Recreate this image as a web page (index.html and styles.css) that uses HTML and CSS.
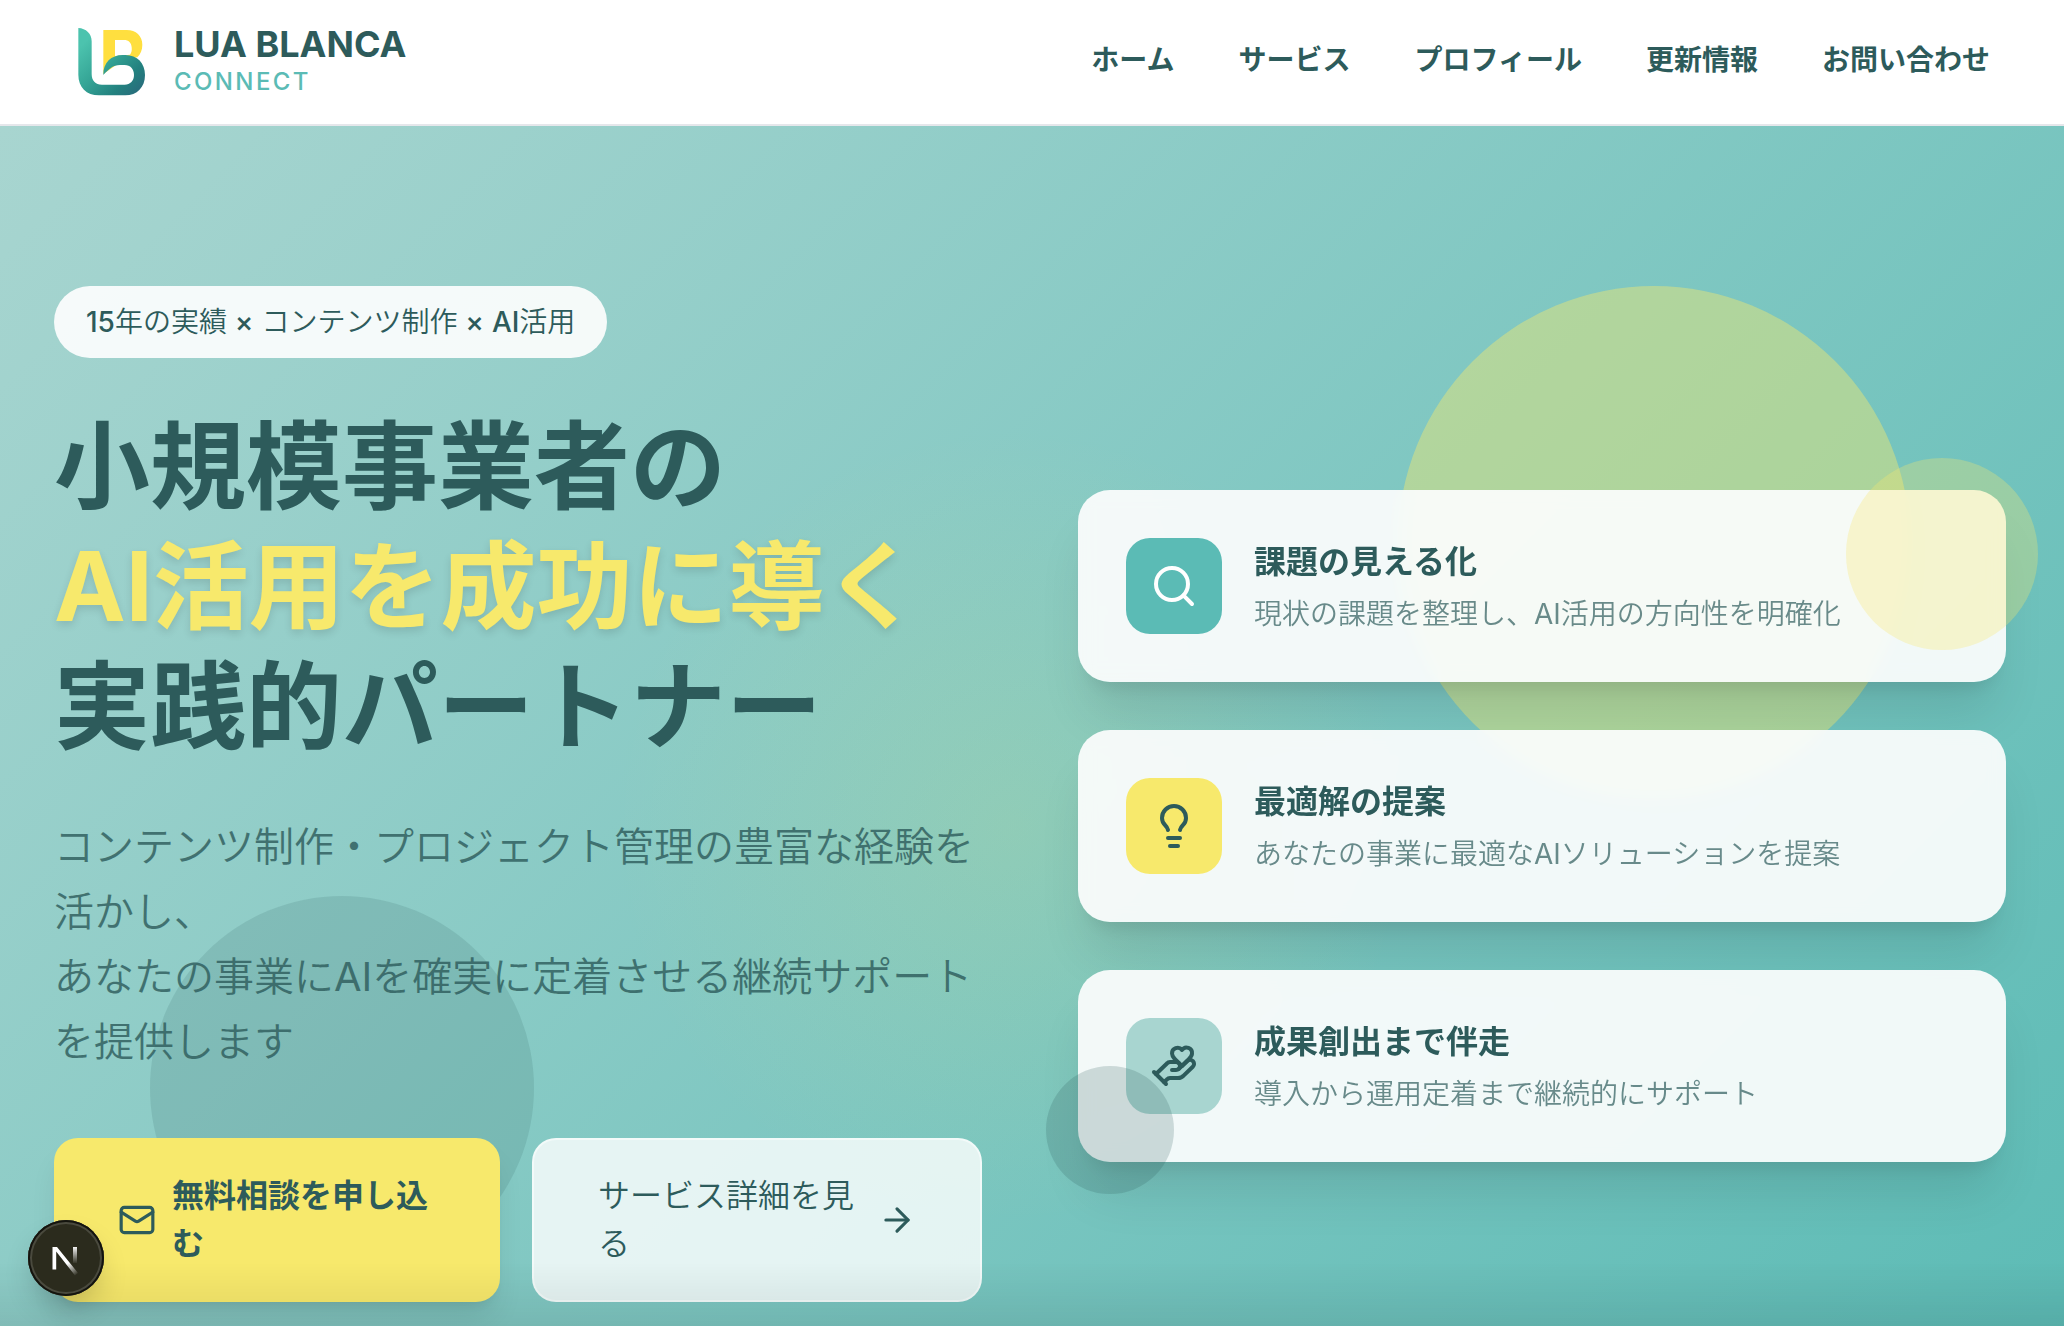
FILE: index.html
```html
<!DOCTYPE html>
<html lang="ja">
<head>
<meta charset="utf-8">
<meta name="viewport" content="width=device-width, initial-scale=1">
<title>LUA BLANCA CONNECT</title>
<link rel="stylesheet" href="styles.css">
</head>
<body>
<header class="site-header">
  <a class="brand" href="#">
    <svg class="brand-logo" viewBox="96 66 240 240" aria-hidden="true">
      <defs>
        <linearGradient id="lb-teal" gradientUnits="userSpaceOnUse" x1="130" y1="130" x2="290" y2="290">
          <stop offset="0" stop-color="#4cc3ae"/>
          <stop offset=".4" stop-color="#35a596"/>
          <stop offset=".75" stop-color="#23817f"/>
          <stop offset="1" stop-color="#296b7c"/>
        </linearGradient>
      </defs>
      <path fill="#ffdf3f" fill-rule="evenodd" d="M190 90H260C288 90 307 108 307 134C307 150 302 162 292 172L250 180L190 222ZM225 120V168L270 164C275 158 276 150 275 142C274 128 266 120 252 120Z"/>
      <path fill="url(#lb-teal)" d="M115 84C138 85 155 101 155 124V222C155 242 166 254 186 254H254C271 254 282 242 282 225C282 207 271 195 254 195H240C219 195 207 207 190 225C189 188 214 165 248 165H256C292 165 315 190 315 225C315 262 291 286 256 286H177C139 286 115 262 115 224Z"/>
    </svg>
    <span class="brand-text">
      <span class="brand-name">LUA BLANCA</span>
      <span class="brand-sub">CONNECT</span>
    </span>
  </a>
  <nav class="site-nav">
    <a href="#">ホーム</a>
    <a href="#">サービス</a>
    <a href="#">プロフィール</a>
    <a href="#">更新情報</a>
    <a href="#">お問い合わせ</a>
  </nav>
</header>
<main class="hero">
  <div class="orb orb-sun"></div>
  <div class="orb orb-shade"></div>
  <div class="hero-inner">
    <section class="intro">
      <p class="badge"><b>15</b>年の実績 <b>×</b> コンテンツ制作 <b>×</b> <b>AI</b>活用</p>
      <h1 class="headline">小規模事業者の<br><span class="headline-accent">AI活用を成功に導く</span><br>実践的パートナー</h1>
      <p class="lead">コンテンツ制作・プロジェクト管理の豊富な経験を活かし、<br>あなたの事業に<span class="latin">AI</span>を確実に定着させる継続サポートを提供します</p>
      <div class="actions">
        <button class="btn btn-primary" type="button">
          <svg class="btn-icon" viewBox="0 0 24 24" aria-hidden="true"><rect x="2" y="4" width="20" height="16" rx="2"/><path d="m22 7-8.970 5.700a1.940 1.940 0 0 1-2.060 0L2 7"/></svg>
          <span>無料相談を申し込む</span>
        </button>
        <button class="btn btn-secondary" type="button">
          <span>サービス詳細を見る</span>
          <svg class="btn-icon" viewBox="0 0 24 24" aria-hidden="true"><path d="M5 12h14"/><path d="m12 5 7 7-7 7"/></svg>
        </button>
      </div>
    </section>
    <section class="features">
      <article class="card">
        <div class="card-icon card-icon-teal"><svg viewBox="0 0 24 24" aria-hidden="true"><circle cx="11" cy="11" r="8"/><path d="m21 21-4.300-4.300"/></svg></div>
        <div><h2 class="card-title">課題の見える化</h2><p class="card-desc">現状の課題を整理し、<span class="latin">AI</span>活用の方向性を明確化</p></div>
      </article>
      <article class="card">
        <div class="card-icon card-icon-yellow"><svg viewBox="0 0 24 24" aria-hidden="true"><path d="M15 14c.2-1 .7-1.700 1.500-2.500 1-.9 1.500-2.200 1.500-3.500A6 6 0 0 0 6 8c0 1 .2 2.200 1.500 3.500.7.7 1.300 1.500 1.500 2.500"/><path d="M9 18h6"/><path d="M10 22h4"/></svg></div>
        <div><h2 class="card-title">最適解の提案</h2><p class="card-desc">あなたの事業に最適な<span class="latin">AI</span>ソリューションを提案</p></div>
      </article>
      <article class="card">
        <div class="card-icon card-icon-mint"><svg viewBox="0 0 24 24" aria-hidden="true"><path d="M11 14h2a2 2 0 1 0 0-4h-3c-.6 0-1.100.2-1.400.6L3 16"/><path d="m7 20 1.600-1.400c.3-.4.8-.6 1.400-.6h4c1.100 0 2.100-.4 2.800-1.200l4.600-4.400a2 2 0 0 0-2.750-2.910l-4.200 3.900"/><path d="m2 15 6 6"/><path d="M19.500 8.500c.7-.7 1.500-1.600 1.500-2.700A2.730 2.730 0 0 0 16 4a2.780 2.780 0 0 0-5 1.800c0 1.200.8 2 1.500 2.800L16 12Z"/></svg></div>
        <div><h2 class="card-title">成果創出まで伴走</h2><p class="card-desc">導入から運用定着まで継続的にサポート</p></div>
      </article>
      <div class="orb orb-glint"></div>
      <div class="orb orb-dusk"></div>
    </section>
  </div>
  <div class="hero-fade"></div>
</main>
<button class="dev-badge" type="button" aria-label="Open developer tools">
  <svg viewBox="0 0 76 76" aria-hidden="true">
    <defs>
      <linearGradient id="n-diag" gradientUnits="userSpaceOnUse" x1="40" y1="43" x2="49" y2="55"><stop offset="0" stop-color="#fff"/><stop offset="1" stop-color="#fff" stop-opacity="0"/></linearGradient>
      <linearGradient id="n-stem" gradientUnits="userSpaceOnUse" x1="0" y1="26" x2="0" y2="44"><stop offset="0" stop-color="#fff"/><stop offset="1" stop-color="#fff" stop-opacity="0"/></linearGradient>
    </defs>
    <path d="M24.500 27H29L50 53L47 55.500L28.200 31.500V49.500H24.500Z" fill="url(#n-diag)"/>
    <path d="M47 27V43" fill="none" stroke="url(#n-stem)" stroke-width="4"/>
  </svg>
</button>
</body>
</html>
```
FILE: styles.css
```css
:root {
  --ink: #2d5b5b;
  --teal: #5bbbb5;
  --mint: #a8d5d0;
  --yellow: #f7e96c;
}

* { box-sizing: border-box; }

body {
  margin: 0;
  min-height: 100vh;
  display: flex;
  flex-direction: column;
  overflow: hidden;
  color: var(--ink);
  font-family: Inter, "Noto Sans CJK JP", sans-serif;
  font-size: 28px;
}

h1, h2, p { margin: 0; }
a { color: inherit; text-decoration: none; }
button { font: inherit; color: inherit; cursor: pointer; }
.latin { font-weight: 400; }

.site-header {
  display: flex;
  align-items: center;
  justify-content: space-between;
  height: 126px;
  padding: 0 74px 0 72px;
  background: #fff;
  border-bottom: 2px solid #e5e7eb;
}

.brand { display: flex; align-items: center; gap: 22px; }
.brand-logo { width: 80px; height: 80px; }
.brand-text { display: flex; flex-direction: column; }
.brand-name { font-size: 36px; font-weight: 700; line-height: 40px; }
.brand-sub { font-size: 24px; font-weight: 500; line-height: 36px; letter-spacing: .1em; color: var(--teal); }

.site-nav { display: flex; gap: 64px; font-weight: 700; line-height: 40px; padding-bottom: 4px; }

.hero {
  position: relative;
  flex: 1;
  padding: 160px 58px 24px 54px;
  background:
    radial-gradient(circle at 49% 54%, rgba(247, 233, 108, .13), rgba(247, 233, 108, 0) 400px),
    linear-gradient(135deg, var(--mint), var(--teal));
  background-size: 100% 108%;
}

.hero-inner {
  position: relative;
  display: grid;
  grid-template-columns: 1fr 1fr;
  align-items: center;
  gap: 96px;
}

.badge {
  display: inline-block;
  padding: 16px 32px;
  border-radius: 36px;
  background: rgba(252, 253, 253, .93);
  font-weight: 350;
  line-height: 40px;
}
.badge b { font-weight: 500; }

.headline { margin-top: 48px; font-size: 96px; font-weight: 700; line-height: 120px; }
.headline-accent { color: var(--yellow); text-shadow: 0 4px 8px rgba(0, 0, 0, .12); }

.lead { margin-top: 48px; font-size: 40px; font-weight: 350; line-height: 65px; opacity: .8; }

.actions { display: grid; grid-template-columns: 446fr 450fr; gap: 32px; margin-top: 64px; }

.btn {
  display: flex;
  align-items: center;
  gap: 16px;
  padding: 32px 64px;
  border: 0;
  border-radius: 24px;
  font-size: 32px;
  line-height: 48px;
  text-align: left;
}
.btn span { flex: 1; }
.btn-icon {
  flex: none;
  width: 38px;
  height: 38px;
  fill: none;
  stroke: currentColor;
  stroke-width: 2;
  stroke-linecap: round;
  stroke-linejoin: round;
}
.btn-primary {
  background: var(--yellow);
  font-weight: 700;
  box-shadow: 0 20px 30px -6px rgba(0, 0, 0, .1), 0 8px 12px -8px rgba(0, 0, 0, .1);
}
.btn-secondary { background: rgba(255, 255, 255, .8); border: 2px solid rgba(255, 255, 255, .5); font-weight: 350; }

.features { position: relative; display: grid; gap: 48px; margin-top: 64px; }

.card {
  display: flex;
  align-items: center;
  gap: 32px;
  padding: 48px;
  border-radius: 32px;
  background: rgba(252, 253, 253, .93);
  backdrop-filter: blur(8px);
  box-shadow: 0 40px 50px -10px rgba(0, 0, 0, .1), 0 16px 20px -12px rgba(0, 0, 0, .1);
}
.card-icon { display: grid; place-items: center; width: 96px; height: 96px; border-radius: 24px; }
.card-icon svg { width: 48px; height: 48px; fill: none; stroke: currentColor; stroke-width: 2; stroke-linecap: round; stroke-linejoin: round; }
.card-icon-teal { background: var(--teal); color: #fff; }
.card-icon-yellow { background: var(--yellow); }
.card-icon-mint { background: var(--mint); }
.card-title { margin-bottom: 8px; font-size: 32px; font-weight: 700; line-height: 48px; }
.card-desc { font-weight: 350; line-height: 40px; opacity: .7; }

.orb { position: absolute; border-radius: 50%; pointer-events: none; }
.orb-sun { top: 160px; right: 154px; width: 512px; height: 512px; background: rgba(247, 233, 108, .42); }
.orb-shade { top: 770px; left: 150px; width: 384px; height: 384px; background: rgba(45, 91, 91, .15); }
.orb-glint { top: -32px; right: -32px; width: 192px; height: 192px; background: rgba(247, 233, 108, .3); }
.orb-dusk { bottom: -32px; left: -32px; width: 128px; height: 128px; background: rgba(45, 91, 91, .2); }

.hero-fade {
  position: absolute;
  inset: auto 0 0;
  height: 64px;
  background: linear-gradient(rgba(0, 0, 0, 0), rgba(0, 0, 0, .08));
  pointer-events: none;
}

.dev-badge {
  position: fixed;
  left: 28px;
  bottom: 30px;
  width: 76px;
  height: 76px;
  padding: 0;
  border: 0;
  border-radius: 50%;
  background: #2b2b1d;
  box-shadow: inset 0 0 0 2px #14140e, inset 0 0 0 4px #4a4a3e, 0 16px 32px -8px rgba(0, 0, 0, .24);
}
.dev-badge svg { display: block; width: 76px; height: 76px; }
```
